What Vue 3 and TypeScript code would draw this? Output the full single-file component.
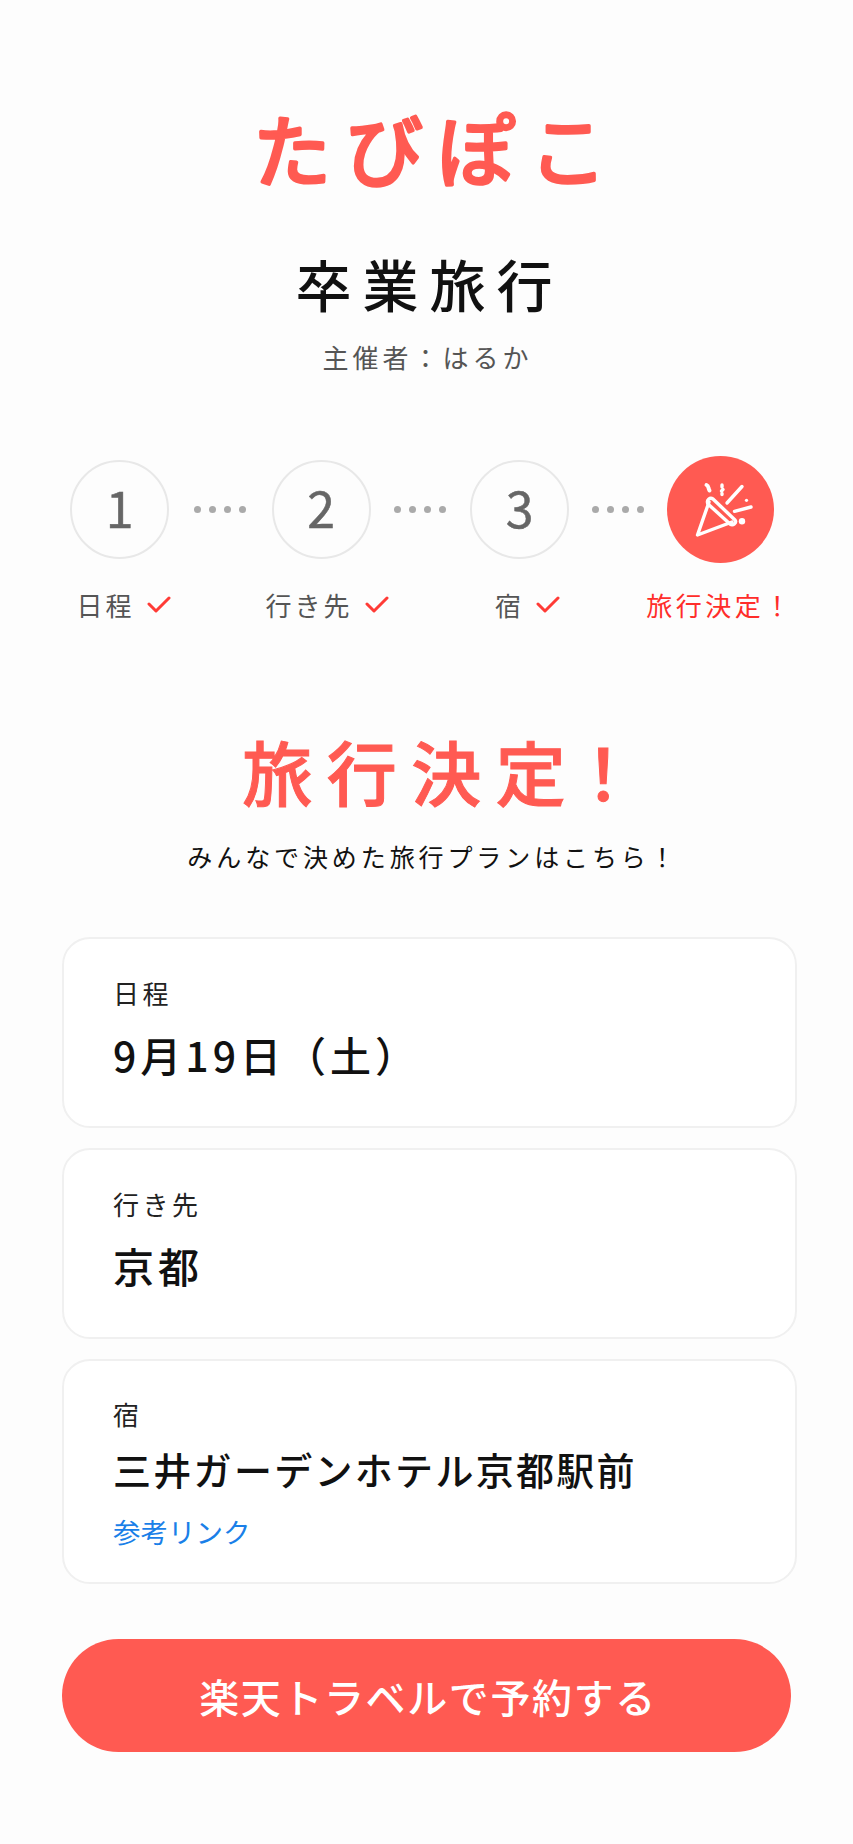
<script setup lang="ts">
interface Step {
  label: string;
  num?: number;
}

const steps: Step[] = [
  { label: '日程', num: 1 },
  { label: '行き先', num: 2 },
  { label: '宿', num: 3 }
];

const dots = [1, 2, 3, 4];
</script>

<template>
  <div class="page">
    <svg class="logo" width="440" height="130" viewBox="0 0 440 130">
      <text x="230" y="101" text-anchor="middle">たびぽこ</text>
    </svg>
    <h1 class="trip-title">卒業旅行</h1>
    <p class="host">主催者：はるか</p>

    <!-- ステップ -->
    <div class="steps">
      <template v-for="step in steps" :key="step.num">
        <div class="circle">{{ step.num }}</div>
        <div class="dots">
          <i v-for="d in dots" :key="d"></i>
        </div>
      </template>
      <div class="circle done">
        <svg width="64" height="64" viewBox="0 0 64 64" fill="none" stroke="#fff" stroke-width="3.4" stroke-linecap="round" stroke-linejoin="round">
          <path d="M20 24 L8.5 57 L43 44" />
          <path d="M24 21 L46 42 C48 45 44 48 41 46 L19 26 C17 22 21 19 24 21 Z" />
          <path d="M38 25 L53 8.5" />
          <path d="M45.5 33.3 L62 29" />
          <circle cx="57.5" cy="22.3" r="1.6" fill="#fff" stroke="none" />
          <circle cx="53" cy="43.3" r="3.2" fill="#fff" stroke="none" />
          <path d="M17.5 7 C20 8 19 10 20.5 12.5" stroke-width="4" />
          <path d="M33 7 L33 9 M34 11.5 L32.5 13 M33 15.5 L33 16.5" />
        </svg>
      </div>

      <div v-for="step in steps" :key="step.label" class="step-label" :class="'label-' + step.num">
        <span>{{ step.label }}</span>
        <svg width="24" height="18" viewBox="0 0 24 18" fill="none" stroke="#ff3b36" stroke-width="3" stroke-linecap="round" stroke-linejoin="round">
          <path d="M2 8 L9 15 L22 2" />
        </svg>
      </div>
      <div class="step-label final">旅行決定！</div>
    </div>

    <h2 class="decided">旅行決<span class="tight">定</span>！</h2>
    <p class="lead">みんなで決めた旅行プランはこちら！</p>

    <div class="cards">
      <section class="card">
        <div class="card-label">日程</div>
        <div class="card-value wide">9月19日（土）</div>
      </section>
      <section class="card">
        <div class="card-label">行き先</div>
        <div class="card-value wide">京都</div>
      </section>
      <section class="card hotel">
        <div class="card-label">宿</div>
        <div class="card-value">三井ガーデンホテル京都駅前</div>
        <a class="ref-link">参考リンク</a>
      </section>
    </div>

    <button class="reserve-btn">楽天トラベルで予約する</button>
  </div>
</template>

<style>
html,
body {
  margin: 0;
  background: #fdfdfd;
}
</style>

<style scoped>
.page {
  width: 853px;
  height: 1844px;
  box-sizing: border-box;
  padding-top: 80px;
  display: flex;
  flex-direction: column;
  align-items: center;
  overflow: hidden;
  background: #fdfdfd;
  color: #111;
  font-family: "Noto Sans CJK JP", "Noto Sans", sans-serif;
}

.logo {
  display: block;
}

/* ロゴは丸ゴシックがないので線を足して丸める */
.logo text {
  font-size: 78px;
  font-weight: 400;
  letter-spacing: 14px;
  fill: #ff5a52;
  stroke: #ff5a52;
  stroke-width: 3.5px;
  stroke-linejoin: round;
}

.trip-title {
  margin: 34px 0 0 6px;
  font-size: 56px;
  line-height: 78px;
  font-weight: 500;
  letter-spacing: 11px;
  color: #111;
}

.host {
  margin: 17px 0 0 2px;
  font-size: 26px;
  line-height: 36px;
  letter-spacing: 4px;
  color: #555;
}

/* ステップ */
.steps {
  align-self: flex-start;
  margin: 81px 0 0 70px;
  display: grid;
  grid-template-columns: 99px 102.5px 99px 99.5px 99px 98px 107px;
  align-items: center;
  row-gap: 24px;
}

.circle {
  width: 99px;
  height: 99px;
  box-sizing: border-box;
  padding-bottom: 7px;
  border: 2px solid #e8e8e8;
  border-radius: 50%;
  display: flex;
  align-items: center;
  justify-content: center;
  font-size: 50px;
  color: #666;
  font-weight: 400;
  -webkit-text-stroke: 0.5px #666;
}

.circle.done {
  width: 107px;
  height: 107px;
  padding: 0;
  border: none;
  background: #ff5a52;
}

.dots {
  display: flex;
  justify-content: center;
  gap: 8px;
}

.dots i {
  width: 7px;
  height: 7px;
  border-radius: 50%;
  background: #aaa;
}

.step-label {
  grid-row: 2;
  justify-self: center;
  display: flex;
  align-items: center;
  gap: 12px;
  white-space: nowrap;
  font-size: 26px;
  line-height: 36px;
  letter-spacing: 3px;
  color: #555;
}

.label-1 {
  grid-column: 1;
  margin-left: 8px;
}

.label-2 {
  grid-column: 3;
  margin-left: 12px;
}

.label-3 {
  grid-column: 5;
  margin-left: 16px;
}

.step-label.final {
  grid-column: 7;
  margin-left: -1px;
  letter-spacing: 3.5px;
  color: #ff2d2a;
}

.decided {
  margin: 100px 0 0 42px;
  font-size: 70px;
  line-height: 96px;
  font-weight: 500;
  letter-spacing: 14.5px;
  color: #ff5a52;
  -webkit-text-stroke: 1px #ff5a52;
}

.tight {
  letter-spacing: 2.5px;
}

.lead {
  margin: 19px 0 0 13px;
  font-size: 25px;
  line-height: 36px;
  letter-spacing: 3.9px;
  color: #111;
}

.cards {
  margin: 63px 0 0 6px;
  width: 735px;
  display: flex;
  flex-direction: column;
  gap: 20px;
}

.card {
  height: 191px;
  box-sizing: border-box;
  padding: 36px 49px 0;
  border: 2px solid #f0f0f0;
  border-radius: 28px;
  background: #fff;
}

.card.hotel {
  height: 225px;
  padding-top: 35px;
}

.card-label {
  font-size: 26px;
  line-height: 36px;
  letter-spacing: 3.5px;
  color: #222;
}

.card-value {
  margin-top: 11px;
  font-size: 38px;
  line-height: 52px;
  font-weight: 500;
  letter-spacing: 2.3px;
  color: #111;
}

.card-value.wide {
  margin-top: 17px;
  font-size: 41px;
  letter-spacing: 4px;
}

.ref-link {
  display: block;
  margin-top: 18px;
  font-size: 27.5px;
  line-height: 36px;
  color: #1a7fe8;
}

.reserve-btn {
  margin-top: 55px;
  width: 729px;
  height: 113px;
  padding: 0 0 0 3px;
  border: none;
  border-radius: 57px;
  background: #ff5a52;
  color: #fff;
  font-family: inherit;
  font-size: 40px;
  font-weight: 500;
  letter-spacing: 1.6px;
}
</style>
